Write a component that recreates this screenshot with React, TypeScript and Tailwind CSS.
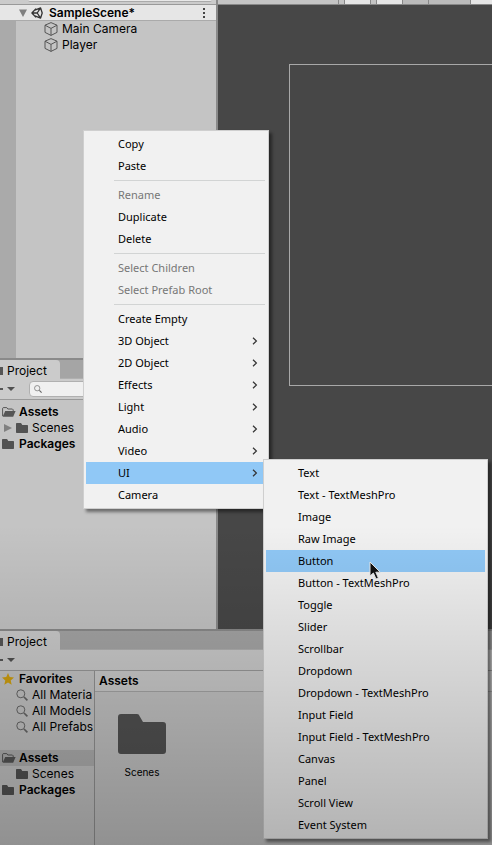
import type { ReactNode } from "react";

type MenuEntry = { label: string; submenu?: boolean; disabled?: boolean; active?: boolean } | "separator";

const contextMenu: MenuEntry[] = [
  { label: "Copy" },
  { label: "Paste" },
  "separator",
  { label: "Rename", disabled: true },
  { label: "Duplicate" },
  { label: "Delete" },
  "separator",
  { label: "Select Children", disabled: true },
  { label: "Select Prefab Root", disabled: true },
  "separator",
  { label: "Create Empty" },
  { label: "3D Object", submenu: true },
  { label: "2D Object", submenu: true },
  { label: "Effects", submenu: true },
  { label: "Light", submenu: true },
  { label: "Audio", submenu: true },
  { label: "Video", submenu: true },
  { label: "UI", submenu: true, active: true },
  { label: "Camera" },
];

const uiMenu: MenuEntry[] = [
  { label: "Text" },
  { label: "Text - TextMeshPro" },
  { label: "Image" },
  { label: "Raw Image" },
  { label: "Button", active: true },
  { label: "Button - TextMeshPro" },
  { label: "Toggle" },
  { label: "Slider" },
  { label: "Scrollbar" },
  { label: "Dropdown" },
  { label: "Dropdown - TextMeshPro" },
  { label: "Input Field" },
  { label: "Input Field - TextMeshPro" },
  { label: "Canvas" },
  { label: "Panel" },
  { label: "Scroll View" },
  { label: "Event System" },
];

function Menu({ entries, label }: { entries: MenuEntry[]; label: string }) {
  return (
    <div
      role="menu"
      aria-label={label}
      className="flex flex-col border border-[#cfcfcf] bg-[#f1f1f1] p-0.5 font-['Noto_Sans','Open_Sans',sans-serif] text-[11px] text-black shadow-[3px_3px_3px_rgba(0,0,0,0.45)]"
    >
      {entries.map((entry, i) =>
        entry === "separator" ? (
          <div key={i} role="separator" className="mr-px ml-7 flex h-[7px] items-center">
            <div className="h-px w-full bg-[#d2d4d4]" />
          </div>
        ) : (
          <button
            key={i}
            role="menuitem"
            disabled={entry.disabled}
            className={
              "flex h-[22px] items-center justify-between pr-2 pl-8 text-left whitespace-nowrap disabled:text-[#777777] " +
              (entry.active ? "bg-[#90c8f6]" : "")
            }
          >
            {entry.label}
            {entry.submenu && (
              <svg className="h-2 w-1.5" viewBox="0 0 6 8" fill="none" stroke="#333" strokeWidth="1.2">
                <path d="M1 .7L4.4 4 1 7.3" />
              </svg>
            )}
          </button>
        ),
      )}
    </div>
  );
}

function Folder({ className = "h-2.5 w-3" }: { className?: string }) {
  return (
    <svg className={"shrink-0 " + className} viewBox="0 0 48 40" preserveAspectRatio="none" fill="#525252">
      <path d="M3 0h16c1.500 0 2 .8 2.500 2L25 8h20a3 3 0 0 1 3 3v26a3 3 0 0 1-3 3H3a3 3 0 0 1-3-3V3a3 3 0 0 1 3-3z" />
    </svg>
  );
}

function OpenFolder() {
  return (
    <svg className="h-2.5 w-3.5 shrink-0" viewBox="0 0 14 10" fill="none">
      <path d="M.6 9V1.2L1.2.6h3.6l1 1.400h4.600l.8.8V4" stroke="#555" strokeWidth="1" />
      <path d="M3.200 4H13.600L11.200 9.800H.6z" fill="#555" />
    </svg>
  );
}

function Cube() {
  return (
    <svg className="size-3.5 shrink-0" viewBox="0 0 14 14" fill="none" stroke="#555" strokeWidth="1" strokeLinejoin="round">
      <path d="M7 .6l6 2.6v7.2l-6 3-6-3V3.2zM1 3.2L7 6.4l6-3.2M7 6.4v7" />
    </svg>
  );
}

function UnityLogo() {
  return (
    <svg className="size-3 shrink-0" viewBox="0 0 12 12" fill="none" stroke="#333" strokeWidth="1.3" strokeLinejoin="round">
      <path d="M5 1.6L.9 6 5 10.4M3.2 3.4L9.6.9 11.2 6 9.6 11.1 3.2 8.6M.9 6h5.3M6.2 6l3.2-4.8M6.2 6l3.2 4.8" />
    </svg>
  );
}

function Magnifier({ className }: { className: string }) {
  return (
    <svg className={"shrink-0 " + className} viewBox="0 0 12 12" fill="none" stroke="#666">
      <circle cx="4.8" cy="4.8" r="4" strokeWidth="1" />
      <path d="M8 8l3.4 3.4" strokeWidth="1.7" />
    </svg>
  );
}

function Star() {
  return (
    <svg className="size-3 shrink-0" viewBox="0 0 12 12" fill="#d0a010">
      <path d="M6 0l1.700 4.100 4.300.4-3.300 2.900 1 4.400L6 9.500l-3.700 2.300 1-4.400L0 4.500l4.300-.4z" />
    </svg>
  );
}

function Triangle({ down = false }: { down?: boolean }) {
  return (
    <svg className="size-2 shrink-0" viewBox="0 0 8 8" fill="#808080">
      <path d={down ? "M0 .5h8L4 8z" : "M0 0l8 4-8 4z"} />
    </svg>
  );
}

function Row({ children, className = "" }: { children: ReactNode; className?: string }) {
  return <li className={"flex h-4 items-center whitespace-nowrap " + className}>{children}</li>;
}

function ProjectHeader({ search = false }: { search?: boolean }) {
  return (
    <>
      <div className="flex h-[19px] shrink-0 border-b border-[#b0b0b0] bg-[#a5a5a5]">
        <button className="-mb-px flex w-[60px] items-center gap-1 rounded-tr-sm bg-[#cbcbcb] pt-0.5">
          <span className="h-2 w-[3px] bg-[#555]" />
          Project
        </button>
      </div>
      <div className="flex h-[21px] shrink-0 items-center border-b border-[#999] bg-[#cbcbcb]">
        <button aria-label="Create" className="flex items-center gap-1">
          <span className="h-0.5 w-[3px] bg-[#555]" />
          <svg className="h-1 w-2" viewBox="0 0 8 4" fill="#505050">
            <path d="M0 0h8L4 4z" />
          </svg>
        </button>
        {search && (
          <label className="ml-3.5 flex h-4 flex-1 items-center rounded-sm border border-[#b0b0b0] bg-[#f0f0f0] pl-1">
            <Magnifier className="size-2" />
            <input aria-label="Search project" className="w-full bg-transparent pl-1 outline-none" />
          </label>
        )}
      </div>
    </>
  );
}

export default function App() {
  return (
    <div className="relative flex h-screen flex-col overflow-hidden bg-[#c4c4c4] font-['Inter','Liberation_Sans',sans-serif] text-xs text-black">
      <div className="flex min-h-0 flex-1">
        <div className="flex w-[218px] shrink-0 flex-col border-r-2 border-[#8a8a8a]">
          <section className="flex min-h-0 flex-[4] flex-col">
            <div className="h-[5px] shrink-0 border-b border-[#999] bg-[#cbcbcb] pr-1 pl-7">
              <div className="h-0.5 rounded-b-sm border-b border-[#aaa] bg-[#e8e8e8]" />
            </div>
            <div className="flex h-4 shrink-0 items-center border-b border-[#aaa] bg-[#e6e6e6] pr-[11px] pl-[19px]">
              <Triangle down />
              <span className="ml-1">
                <UnityLogo />
              </span>
              <span className="ml-1.5 flex-1 font-semibold">SampleScene*</span>
              <button aria-label="Scene options" className="flex flex-col gap-0.5">
                <span className="size-0.5 bg-[#444]" />
                <span className="size-0.5 bg-[#444]" />
                <span className="size-0.5 bg-[#444]" />
              </button>
            </div>
            <div className="flex min-h-0 flex-1">
              <div className="w-4 bg-[#aaaaaa]" />
              <ul className="flex-1 pl-7">
                <Row className="gap-1">
                  <Cube />
                  Main Camera
                </Row>
                <Row className="gap-1">
                  <Cube />
                  Player
                </Row>
              </ul>
            </div>
          </section>
          <section className="flex min-h-0 flex-[3] flex-col border-t-2 border-[#8a8a8a]">
            <ProjectHeader search />
            <ul className="pt-1">
              <Row className="gap-[3px] pl-0.5 font-semibold">
                <OpenFolder />
                Assets
              </Row>
              <Row className="gap-1 pl-1">
                <Triangle />
                <Folder />
                Scenes
              </Row>
              <Row className="gap-[5px] pl-0.5 font-semibold">
                <Folder />
                Packages
              </Row>
            </ul>
          </section>
        </div>

        <main className="flex min-w-0 flex-1 flex-col bg-[#474747]">
          <div className="flex h-[5px] shrink-0 border-b border-[#888] bg-[#c4c4c4]">
            <div className="w-[121px] border-r border-[#888]" />
            <div className="w-1.5 border-r border-[#888]" />
            <div className="w-[26px] border-r border-[#888] bg-[#e6e6e6]" />
            <div className="w-1.5 border-r border-[#888]" />
            <div className="w-[26px] border-r border-[#888] bg-[#e6e6e6]" />
            <div className="w-[26px] border-r border-[#888] bg-[#bbb]" />
            <div className="w-[42px] border-r border-[#888] bg-[#bbb]" />
            <div className="flex-1 bg-[#e6e6e6]" />
          </div>
          <div className="mt-[59px] ml-[71px] h-[322px] border border-r-0 border-[#a8a8a8]" />
        </main>
      </div>

      <section className="flex h-54 shrink-0 flex-col border-t-2 border-[#8a8a8a]">
        <ProjectHeader />
        <div className="flex min-h-0 flex-1">
          <ul className="w-[95px] shrink-0 border-r border-[#929292]">
            <Row className="gap-[5px] pl-0.5 font-semibold">
              <Star />
              Favorites
            </Row>
            {["All Materia", "All Models", "All Prefabs"].map((name) => (
              <Row key={name} className="gap-1 pl-4">
                <Magnifier className="size-3" />
                {name}
              </Row>
            ))}
            <Row className="mt-[15px] gap-[3px] bg-[#b0b0b0] pl-0.5 font-semibold">
              <OpenFolder />
              Assets
            </Row>
            <Row className="gap-1 pl-4">
              <Folder />
              Scenes
            </Row>
            <Row className="gap-[5px] pl-0.5 font-semibold">
              <Folder />
              Packages
            </Row>
          </ul>
          <div className="flex-1">
            <h2 className="flex h-[21px] items-center border-b border-[#a5a5a5] bg-[#cbcbcb] pl-1 font-semibold">Assets</h2>
            <button className="mt-[22px] ml-[23px] flex flex-col items-center gap-3 text-[10px]">
              <Folder className="h-10 w-12" />
              Scenes
            </button>
          </div>
        </div>
      </section>

      <div className="absolute top-[130px] left-[83px] w-[186px]">
        <Menu entries={contextMenu} label="Hierarchy" />
      </div>
      <div className="absolute top-[459px] left-[263px] w-[225px]">
        <Menu entries={uiMenu} label="UI" />
      </div>
      <svg className="absolute top-[561px] left-[369px] h-5 w-3" viewBox="0 0 12 20">
        <path d="M1 1v14l3.4-3 2.6 6 2.4-1-2.6-5.8h4.4z" fill="#111" stroke="#e8e8e8" strokeWidth="1" />
      </svg>
      <div className="pointer-events-none absolute inset-x-0 bottom-0 h-[320px] bg-linear-to-b from-transparent to-black/26" />
    </div>
  );
}
